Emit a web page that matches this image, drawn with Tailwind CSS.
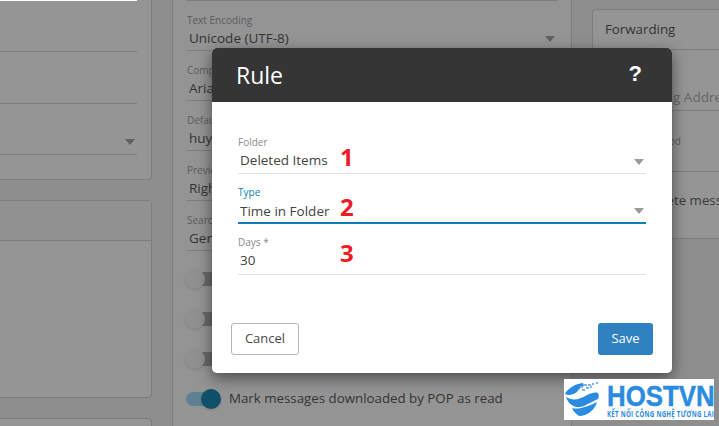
<!DOCTYPE html>
<html>
<head>
<meta charset="utf-8">
<script src="https://cdn.jsdelivr.net/npm/@tailwindcss/browser@4"></script>
</head>
<body class="m-0">
<div class="relative w-[719px] h-[426px] overflow-hidden bg-[#8e8e8e] font-['Open_Sans','Noto_Sans',sans-serif] text-[#3a3a3a]">
  <!-- background page -->
  <div class="flex h-full">
    <div class="w-[152px] shrink-0 flex flex-col gap-[20px] mt-[-40px]">
      <div class="h-[220px] shrink-0 bg-[#959595] border border-[#7d7d7d] border-l-0 rounded-br-[4px] flex flex-col">
        <div class="h-[40px] shrink-0 bg-white mr-[14px]"></div>
        <div class="h-[51px] shrink-0 mr-[14px] border-b border-[#7d7d7d]"></div>
        <div class="h-[52px] shrink-0 mr-[14px] border-b border-[#7d7d7d]"></div>
        <div class="relative h-[51px] shrink-0 mr-[14px] border-b border-[#7d7d7d]">
          <span class="absolute right-[2px] top-[35px] w-0 h-0 border-x-[5px] border-x-transparent border-t-[6px] border-t-[#606060]"></span>
        </div>
      </div>
      <div class="h-[198px] shrink-0 bg-[#959595] border border-[#7d7d7d] border-l-0 rounded-r-[4px]">
        <div class="h-[40px] bg-[#919191] border-b border-[#7d7d7d]"></div>
      </div>
      <div class="h-[40px] shrink-0 bg-[#959595] border border-[#7d7d7d] border-l-0 rounded-tr-[4px]"></div>
    </div>
    <div class="w-[20px] shrink-0"></div>
    <div class="w-[1px] h-full bg-[#7d7d7d] shrink-0"></div>
    <div class="w-[398px] shrink-0 bg-[#949494] pl-[14px] text-[#333]">
      <div class="h-[1px] w-[370px] bg-[#7d7d7d]"></div>
      <div class="pt-[12px] h-[50px] w-[370px] border-b border-[#7d7d7d] relative">
        <p class="text-[10px] leading-[14px] text-[#5c5c5c]">Text Encoding</p>
        <p class="text-[13.5px] leading-[20px] pl-[2px] mt-[1px]">Unicode (UTF-8)</p>
        <span class="absolute right-[2px] top-[35px] w-0 h-0 border-x-[5px] border-x-transparent border-t-[6px] border-t-[#606060]"></span>
      </div>
      <div class="h-[50px] w-[370px] border-b border-[#7d7d7d] pt-[12px]">
        <p class="text-[10px] leading-[14px] text-[#5c5c5c]">Compose Font</p>
        <p class="text-[13.5px] leading-[20px] pl-[2px] mt-[1px]">Arial</p>
      </div>
      <div class="h-[50px] w-[370px] border-b border-[#7d7d7d] pt-[12px]">
        <p class="text-[10px] leading-[14px] text-[#5c5c5c]">Default From</p>
        <p class="text-[13.5px] leading-[20px] pl-[2px] mt-[1px]">huy</p>
      </div>
      <div class="h-[50px] w-[370px] pt-[12px] border-b border-[#7d7d7d]">
        <p class="text-[10px] leading-[14px] text-[#5c5c5c]">Preview Pane</p>
        <p class="text-[13.5px] leading-[20px] pl-[2px] mt-[1px]">Right</p>
      </div>
      <div class="h-[50px] w-[370px] pt-[12px] border-b border-[#7d7d7d]">
        <p class="text-[10px] leading-[14px] text-[#5c5c5c]">Search</p>
        <p class="text-[13.5px] leading-[20px] pl-[2px] mt-[1px]">General</p>
      </div>
      <div class="flex flex-col gap-[20px] mt-[18px]">
        <div class="h-[20px] flex items-center"><span class="relative block w-[36px] h-[14px] rounded-full bg-[#6a6a6a]"><span class="absolute -left-[2px] -top-[3px] w-[20px] h-[20px] rounded-full bg-[#909090] shadow"></span></span></div>
        <div class="h-[20px] flex items-center"><span class="relative block w-[36px] h-[14px] rounded-full bg-[#6a6a6a]"><span class="absolute -left-[2px] -top-[3px] w-[20px] h-[20px] rounded-full bg-[#909090] shadow"></span></span></div>
        <div class="h-[20px] flex items-center"><span class="relative block w-[36px] h-[14px] rounded-full bg-[#6a6a6a]"><span class="absolute -left-[2px] -top-[3px] w-[20px] h-[20px] rounded-full bg-[#909090] shadow"></span></span></div>
        <div class="h-[20px] flex items-center gap-[9px] whitespace-nowrap">
          <span class="relative block w-[34px] h-[14px] -ml-[1px] rounded-full bg-[#5f7f92]"><span class="absolute right-[-1px] -top-[3px] w-[20px] h-[20px] rounded-full bg-[#115069] shadow"></span></span>
          <span class="text-[13.3px] text-[#333]">Mark messages downloaded by POP as read</span>
        </div>
      </div>
    </div>
    <div class="w-[1px] h-full bg-[#7d7d7d] shrink-0"></div>
    <div class="w-[20px] shrink-0"></div>
    <div class="flex-1 pt-[9px]">
      <div class="h-[230px] bg-[#959595] border border-[#7d7d7d] border-r-0 rounded-tl-[4px]">
        <div class="h-[40px] border-b border-[#7d7d7d] pl-[12px] text-[13.3px] leading-[38px] text-[#333]">Forwarding</div>
        <div class="h-[61px] border-b border-[#7d7d7d] relative"><span class="absolute left-[16px] top-[37px] text-[13.5px] leading-[20px] text-[#666] whitespace-nowrap">Forwarding Address</span></div>
        <div class="h-[61px] border-b border-[#7d7d7d] relative"><span class="absolute -left-[4px] top-[23px] text-[10px] text-[#5c5c5c] whitespace-nowrap">Forwarding Method</span></div>
        <div class="relative"><span class="absolute left-[53px] top-[19px] text-[13.3px] whitespace-nowrap">Delete messages</span></div>
      </div>
    </div>
  </div>

  <!-- dialog -->
  <div class="absolute left-[212px] top-[48px] w-[460px] h-[325px] rounded-[5px] bg-white shadow-[0_5px_15px_rgba(0,0,0,0.5)] flex flex-col overflow-hidden">
    <div class="h-[54px] bg-[#353535] flex items-center justify-between pl-[24px] pr-[30px] text-white shrink-0">
      <span class="text-[23px] leading-[30px] font-normal">Rule</span>
      <span class="text-[22px] font-bold leading-[30px] font-['Liberation_Sans',sans-serif] -mt-[2px]">?</span>
    </div>
    <div class="flex-1 px-[26px] pt-[33px] flex flex-col">
      <div class="relative h-[39px] border-b-[1px] border-[#e2e2e2]">
        <p class="text-[10px] leading-[14px] text-[#8a8a8a]">Folder</p>
        <p class="text-[13.5px] leading-[20px] pl-[2px] mt-[1px] text-[#444]">Deleted Items</p>
        <span class="absolute left-[102px] top-[7px] text-[#ee1c25] text-[24px] leading-[30px] font-bold">1</span>
        <span class="absolute right-[2px] top-[24px] w-0 h-0 border-x-[5px] border-x-transparent border-t-[6px] border-t-[#9a9a9a]"></span>
      </div>
      <div class="relative h-[50px] pt-[11px] border-b-[2px] border-[#0a80b5]">
        <p class="text-[10px] leading-[14px] text-[#0a7fb0]">Type</p>
        <p class="text-[13.5px] leading-[20px] pl-[2px] mt-[2px] text-[#444]">Time in Folder</p>
        <span class="absolute left-[102px] top-[18px] text-[#ee1c25] text-[24px] leading-[30px] font-bold">2</span>
        <span class="absolute right-[2px] top-[34px] w-0 h-0 border-x-[5px] border-x-transparent border-t-[6px] border-t-[#9a9a9a]"></span>
      </div>
      <div class="relative h-[51px] pt-[11px] border-b-[1px] border-[#e2e2e2]">
        <p class="text-[10px] leading-[14px] text-[#8a8a8a]">Days *</p>
        <p class="text-[13.5px] leading-[20px] pl-[2px] mt-[1px] text-[#444]">30</p>
        <span class="absolute left-[102px] top-[14px] text-[#ee1c25] text-[24px] leading-[30px] font-bold">3</span>
      </div>
    </div>
    <div class="h-[50px] flex justify-between items-start pl-[19px] pr-[19px] shrink-0">
      <button class="w-[68px] h-[32px] border border-[#b5b5b5] rounded-[3px] bg-white text-[13px] text-[#4a4a4a]">Cancel</button>
      <button class="w-[55px] h-[32px] rounded-[3px] bg-[#2f82bf] text-[13px] text-white">Save</button>
    </div>
  </div>

  <!-- watermark -->
  <div class="absolute left-[564px] top-[379px] w-[150px] h-[41px] bg-white overflow-hidden">
    <svg class="absolute left-[1px] top-[3px]" width="35" height="36" viewBox="0 0 35 36">
      <path d="M0 12 C3 6 10 2 18 1 L19 4 C15 6 13 8 12 10 C8 13 3 14 0 12 Z" fill="#2b8be0"/>
      <path d="M1 15 C7 19 14 18 22 13 C26 11 30 10 33 11 C34 13 34 15 33 17 C29 19 24 21 19 24 C12 27 4 24 1 15 Z" fill="#2b8be0"/>
      <path d="M7 26 C14 28 24 24 32 20 C30 28 22 34 14 34 C11 32 8 29 7 26 Z" fill="#2b8be0"/>
      <g fill="#7fb6ea"><rect x="15" y="4" width="3" height="2"/><rect x="19" y="2" width="3" height="2"/><rect x="23" y="2" width="3" height="2"/><rect x="27" y="1" width="2" height="2"/><rect x="31" y="0" width="2" height="2"/><rect x="17" y="7" width="3" height="2"/><rect x="21" y="5" width="3" height="2"/><rect x="25" y="4" width="2" height="2"/></g>
    </svg>
    <div class="absolute left-[43px] top-0 flex flex-col whitespace-nowrap text-[#2b8be0]">
      <span class="block origin-left scale-x-[0.86] text-[30px] leading-[29px] pt-[2px] font-bold font-['Liberation_Sans',sans-serif] [-webkit-text-stroke:0.5px_#2b8be0]">HOSTVN</span>
      <span class="block origin-left scale-x-[0.68] text-[9px] leading-[10px] -mt-[1px] font-bold tracking-[0.4px]">KẾT NỐI CÔNG NGHỆ TƯƠNG LAI</span>
    </div>
  </div>
</div>
</body>
</html>
